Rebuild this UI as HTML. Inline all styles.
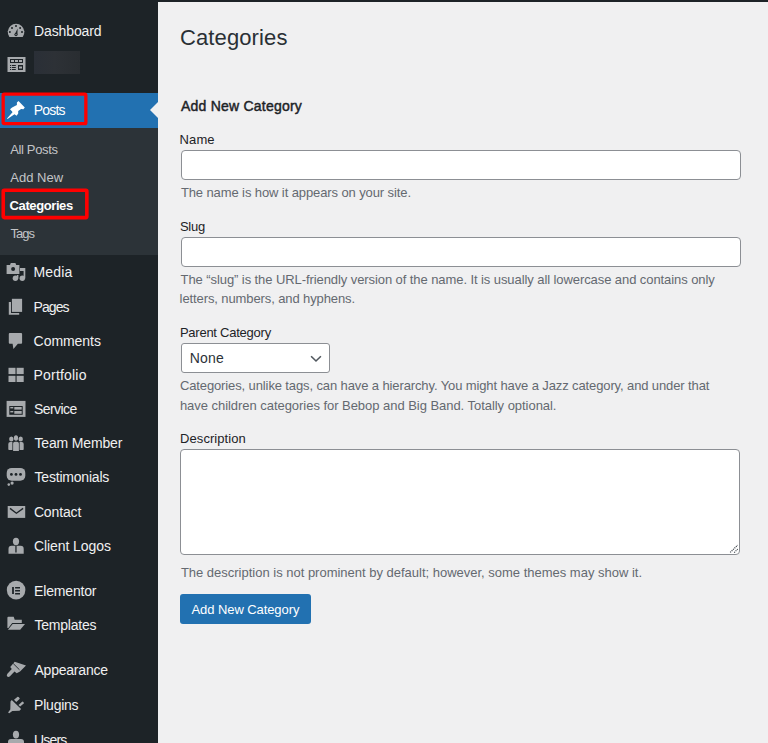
<!DOCTYPE html>
<html><head><meta charset="utf-8">
<style>
html,body{margin:0;padding:0;width:768px;height:743px;overflow:hidden;background:#f0f0f1;font-family:"Liberation Sans",sans-serif;}
.a{position:absolute;}
.t{position:absolute;white-space:nowrap;line-height:1;}
.box{position:absolute;background:#fff;border:1px solid #8c8f94;border-radius:4px;box-sizing:border-box;}
.red{position:absolute;border:3.4px solid #ff0000;border-radius:2.5px;box-sizing:border-box;}
svg.a{overflow:visible}
</style></head><body>
<div class="a" style="left:0;top:0;width:158px;height:743px;background:#1d2327"></div>
<div class="a" style="left:0;top:0;width:768px;height:2px;background:#1d2327"></div>
<!-- blurred row -->
<div class="a" style="left:34px;top:51px;width:46px;height:23px;background:linear-gradient(90deg,#2a2f37 0%,#2d3136 45%,#292d31 100%)"></div>
<!-- Posts band -->
<div class="a" style="left:0;top:93px;width:158px;height:35px;background:#2271b1"></div>
<div class="a" style="left:150px;top:102px;width:0;height:0;border-top:8px solid transparent;border-bottom:8px solid transparent;border-right:8px solid #f0f0f1"></div>
<!-- submenu -->
<div class="a" style="left:0;top:128px;width:158px;height:127px;background:#2c3338"></div>

<svg class="a" style="left:0;top:0" width="30" height="743" viewBox="0 0 30 743">
 <g fill="#a7aaad">
  <!-- dashboard gauge -->
  <path d="M9.4 37 A8.3 8.3 0 1 1 22.7 37 Z"/>
  <g fill="#1d2327">
   <circle cx="16" cy="26" r="1"/><circle cx="12" cy="28" r="1"/><circle cx="20.1" cy="28" r="1"/>
   <circle cx="9.9" cy="31.9" r="1"/><circle cx="22" cy="31.9" r="1"/>
   <path d="M17.6 28.6 L17.4 34.5 L14.6 34.5 Z"/>
   <circle cx="16" cy="34.6" r="1.6"/>
  </g>
  <circle cx="16" cy="34.6" r="0.6" fill="#a7aaad"/>
  <!-- table icon row2 -->
  <rect x="7.5" y="57" width="18" height="15"/>
  <g fill="#1d2327">
   <rect x="10" y="59" width="13" height="4"/>
   <rect x="10" y="65" width="1" height="1"/><rect x="11.8" y="65" width="4" height="1"/>
   <rect x="10" y="67" width="1" height="1"/><rect x="11.8" y="67" width="4" height="1"/>
   <rect x="10" y="69" width="1" height="1"/><rect x="11.8" y="69" width="4" height="1"/>
   <rect x="18" y="65" width="5" height="5"/>
  </g>
  <g fill="#a7aaad">
   <rect x="11" y="60" width="3" height="2"/><rect x="15" y="60" width="3" height="2"/><rect x="19" y="60" width="3" height="2"/>
   <rect x="19" y="66.5" width="3" height="2"/>
  </g>
  <!-- media -->
  <path d="M6.6 265 H10 L10.8 263 H15.4 L16.2 265 H19.4 V274 H6.6 Z"/>
  <circle cx="13.1" cy="268.9" r="2" fill="#1d2327"/>
  <path d="M20 268 H25.3 V278.5 H23.6 V271 H20 Z"/>
  <circle cx="22.3" cy="278.2" r="2.7"/>
  <circle cx="15.4" cy="278.2" r="2.7"/>
  <rect x="16.8" y="275" width="1.6" height="3.5"/>
  <!-- pages -->
  <rect x="11.9" y="298.8" width="10.2" height="13.1"/>
  <path d="M8.8 301.9 H11 V312.9 H19.2 V314.8 H8.8 Z"/>
  <!-- comments -->
  <path d="M9.8 333 H21.1 Q22.1 333 22.1 334 V342.8 Q22.1 343.8 21.1 343.8 H17.9 L13.4 349 L12.6 343.8 H9.8 Q8.8 343.8 8.8 342.8 V334 Q8.8 333 9.8 333 Z"/>
  <!-- portfolio -->
  <rect x="8.5" y="367.8" width="7" height="6.3"/><rect x="16.6" y="367.8" width="7.1" height="6.3"/>
  <rect x="8.5" y="375.8" width="7" height="6.2"/><rect x="16.6" y="375.8" width="7.1" height="6.2"/>
  <!-- service -->
  <rect x="6.6" y="400.9" width="18.9" height="16"/>
  <rect x="9.3" y="406" width="13.4" height="8.8" fill="#1d2327"/>
  <rect x="10.3" y="407" width="3" height="1.4"/><rect x="14.3" y="407" width="7.4" height="2.6"/>
  <rect x="10.3" y="411" width="3" height="1.4"/><rect x="14.3" y="411" width="7.4" height="2.8"/>
  <!-- team member -->
  <ellipse cx="11.3" cy="438.9" rx="2.2" ry="2.5"/><ellipse cx="16" cy="438" rx="2.1" ry="2.8"/><ellipse cx="20.7" cy="438.9" rx="2.2" ry="2.5"/>
  <path d="M8.3 449.2 V444 Q8.3 442 10.3 442 H12.4 V450 H9.1 Q8.3 450 8.3 449.2 Z"/>
  <path d="M13.1 450.9 V443.6 Q13.1 441.8 14.9 441.8 H17.1 Q18.9 441.8 18.9 443.6 V450.9 Z"/>
  <path d="M23.7 449.2 V444 Q23.7 442 21.7 442 H19.6 V450 H22.9 Q23.7 450 23.7 449.2 Z"/>
  <!-- testimonials -->
  <rect x="6.7" y="467.9" width="18.6" height="12.9" rx="5" ry="5"/>
  <circle cx="12.1" cy="483.1" r="1.6"/><circle cx="8.8" cy="484.6" r="1.3"/>
  <g fill="#1d2327"><circle cx="11.4" cy="474.4" r="1.4"/><circle cx="16" cy="474.4" r="1.4"/><circle cx="20.5" cy="474.4" r="1.4"/></g>
  <!-- contact -->
  <rect x="7.7" y="506" width="17.5" height="11.9"/>
  <path d="M10 508.4 L16.4 513.2 L23.1 508.4" fill="none" stroke="#1d2327" stroke-width="1.4"/>
  <!-- client logos -->
  <ellipse cx="16" cy="541.4" rx="3.1" ry="3.7"/>
  <path d="M8.5 553.7 V549 Q8.5 545.8 11.5 545.8 H20.7 Q23.7 545.8 23.7 549 V553.7 Z"/>
  <rect x="15.3" y="546" width="1.3" height="6.5" fill="#1d2327"/>
  <!-- elementor -->
  <circle cx="16.1" cy="590.1" r="9.3"/>
  <g fill="#1d2327"><rect x="12.1" y="587" width="1.8" height="7"/><rect x="15.1" y="587" width="4.9" height="1.5"/><rect x="15.1" y="590" width="4.9" height="1.5"/><rect x="15.1" y="593" width="4.9" height="1.5"/></g>
  <!-- templates -->
  <path d="M7.4 628 V617.8 Q7.4 616.8 8.4 616.8 H13.7 L14.7 619.8 H21.8 V623 H12.2 L8.4 628 Z"/>
  <path d="M8 629.8 L12.6 624 H25 L20.2 629.8 Z"/>
  <!-- appearance brush -->
  <path d="M14.7 661.8 L26 665.4 L20 671.6 L16.7 673.2 L14.5 671.5 L10 676.3 Q8.5 677.5 7.2 676.5 Q6.2 675.2 7.4 673.8 L11.8 669.1 L10.2 666.9 Z"/>
  <path d="M13.2 663.5 L19.5 669.8" stroke="#1d2327" stroke-width="0.9" fill="none"/>
  <!-- plugins -->
  <path d="M11.75 700.1 L21.1 709.1 L19.5 710.8 L12.3 710.9 L9.6 713.1 Q8.6 713.4 8.2 712.3 L10.3 709.6 L10.5 701.5 Z"/>
  <path d="M14 699.75 L17.6 696.8 Q19 696.6 19.8 698.8 L16.3 702 Z"/>
  <path d="M18.5 704.9 L22.4 701.4 Q23.6 701.5 24 703.3 L20.15 706.5 Z"/>
  <!-- users -->
  <ellipse cx="16" cy="734.6" rx="3.1" ry="3.9"/>
  <path d="M8 743 V742 Q8 738.9 11 738.9 H21 Q24 738.9 24 742 V743 Z"/>
 </g>
 <!-- pin -->
 <path fill="#ffffff" d="M7 118.4 L12.5 112.3 L12.1 111.6 L10 109.3 L12.1 107.4 L16.9 105.1 L16.9 102.5 L18.5 101.1 L24.8 107.5 L23.4 109.3 L21.1 109 L18.2 110.9 L18.2 113.5 L16.6 115.8 L14.5 114.3 L7.5 118.9 Z"/>
</svg>

<!-- form boxes -->
<div class="box" style="left:181px;top:150px;width:560px;height:30px"></div>
<div class="box" style="left:181px;top:237px;width:560px;height:30px"></div>
<div class="box" style="left:181px;top:343px;width:149px;height:30px;border-radius:3px"></div>
<svg class="a" style="left:304px;top:346px" width="30" height="30" viewBox="304 346 30 30"><path d="M311.1 356.2 L316 361 L320.9 356.2" fill="none" stroke="#50575e" stroke-width="1.6"/></svg>
<div class="box" style="left:180px;top:449px;width:560px;height:106px"></div>
<svg class="a" style="left:728px;top:543px" width="12" height="12" viewBox="0 0 12 12"><path d="M2.2 9.4 L9.7 2.1 M6.2 9.6 L9.7 6.1" stroke="#3c434a" stroke-width="1.2" stroke-dasharray="1.1 0.9" fill="none"/></svg>
<div class="a" style="left:180px;top:594px;width:131px;height:30px;background:#2271b1;border-radius:3px"></div>

<div id="h1" class="t" style="left:180.00px;top:27px;font-size:22px;font-weight:400;color:#2a3035;letter-spacing:0.111px;">Categories</div>
<div id="h2" class="t" style="left:181.00px;top:99px;font-size:14px;font-weight:400;color:#1d2327;letter-spacing:0.220px;-webkit-text-stroke:0.45px #1d2327;">Add New Category</div>
<div id="l1" class="t" style="left:179.50px;top:133px;font-size:13px;font-weight:400;color:#1d2327;letter-spacing:0.133px;">Name</div>
<div id="d1" class="t" style="left:180.90px;top:186px;font-size:13px;font-weight:400;color:#646970;letter-spacing:-0.103px;">The name is how it appears on your site.</div>
<div id="l2" class="t" style="left:179.90px;top:220px;font-size:13px;font-weight:400;color:#1d2327;letter-spacing:-0.267px;">Slug</div>
<div id="d2a" class="t" style="left:180.60px;top:273px;font-size:13px;font-weight:400;color:#646970;letter-spacing:-0.081px;">The “slug” is the URL-friendly version of the name. It is usually all lowercase and contains only</div>
<div id="d2b" class="t" style="left:179.60px;top:292px;font-size:13px;font-weight:400;color:#646970;letter-spacing:-0.103px;">letters, numbers, and hyphens.</div>
<div id="l3" class="t" style="left:179.90px;top:326px;font-size:13px;font-weight:400;color:#1d2327;letter-spacing:-0.243px;">Parent Category</div>
<div id="sel" class="t" style="left:189.80px;top:351px;font-size:14px;font-weight:400;color:#2c3338;letter-spacing:0.133px;">None</div>
<div id="d3a" class="t" style="left:179.90px;top:379px;font-size:13px;font-weight:400;color:#646970;letter-spacing:-0.115px;">Categories, unlike tags, can have a hierarchy. You might have a Jazz category, and under that</div>
<div id="d3b" class="t" style="left:179.90px;top:399px;font-size:13px;font-weight:400;color:#646970;letter-spacing:-0.040px;">have children categories for Bebop and Big Band. Totally optional.</div>
<div id="l4" class="t" style="left:180.10px;top:432px;font-size:13px;font-weight:400;color:#1d2327;letter-spacing:0.060px;">Description</div>
<div id="d4" class="t" style="left:180.90px;top:566px;font-size:13px;font-weight:400;color:#646970;letter-spacing:-0.008px;">The description is not prominent by default; however, some themes may show it.</div>
<div id="btn" class="t" style="left:191.50px;top:603px;font-size:13px;font-weight:400;color:#ffffff;letter-spacing:-0.080px;">Add New Category</div>
<div id="m_dash" class="t" style="left:34.10px;top:24px;font-size:14px;font-weight:400;color:#f0f0f1;letter-spacing:-0.125px;">Dashboard</div>
<div id="m_posts" class="t" style="left:33.70px;top:103px;font-size:14px;font-weight:400;color:#ffffff;letter-spacing:-0.800px;">Posts</div>
<div id="s_all" class="t" style="left:10.20px;top:143px;font-size:13px;font-weight:400;color:#c3c4c7;letter-spacing:-0.350px;">All Posts</div>
<div id="s_add" class="t" style="left:10.20px;top:171px;font-size:13px;font-weight:400;color:#c3c4c7;letter-spacing:0.033px;">Add New</div>
<div id="s_cat" class="t" style="left:9.60px;top:199px;font-size:13px;font-weight:700;color:#ffffff;letter-spacing:-0.400px;">Categories</div>
<div id="s_tags" class="t" style="left:10.60px;top:227px;font-size:13px;font-weight:400;color:#c3c4c7;letter-spacing:-1.000px;">Tags</div>
<div id="m_media" class="t" style="left:33.50px;top:265px;font-size:14px;font-weight:400;color:#f0f0f1;letter-spacing:0.150px;">Media</div>
<div id="m_pages" class="t" style="left:33.50px;top:300px;font-size:14px;font-weight:400;color:#f0f0f1;letter-spacing:-0.900px;">Pages</div>
<div id="m_comm" class="t" style="left:33.60px;top:334px;font-size:14px;font-weight:400;color:#f0f0f1;letter-spacing:-0.057px;">Comments</div>
<div id="m_port" class="t" style="left:33.50px;top:368px;font-size:14px;font-weight:400;color:#f0f0f1;letter-spacing:0.200px;">Portfolio</div>
<div id="m_serv" class="t" style="left:33.90px;top:402px;font-size:14px;font-weight:400;color:#f0f0f1;letter-spacing:-0.533px;">Service</div>
<div id="m_team" class="t" style="left:34.50px;top:436px;font-size:14px;font-weight:400;color:#f0f0f1;letter-spacing:-0.160px;">Team Member</div>
<div id="m_test" class="t" style="left:34.50px;top:470px;font-size:14px;font-weight:400;color:#f0f0f1;letter-spacing:-0.200px;">Testimonials</div>
<div id="m_cont" class="t" style="left:33.90px;top:505px;font-size:14px;font-weight:400;color:#f0f0f1;letter-spacing:-0.133px;">Contact</div>
<div id="m_client" class="t" style="left:33.90px;top:539px;font-size:14px;font-weight:400;color:#f0f0f1;letter-spacing:-0.073px;">Client Logos</div>
<div id="m_elem" class="t" style="left:34.10px;top:584px;font-size:14px;font-weight:400;color:#f0f0f1;letter-spacing:-0.175px;">Elementor</div>
<div id="m_templ" class="t" style="left:34.50px;top:618px;font-size:14px;font-weight:400;color:#f0f0f1;letter-spacing:-0.225px;">Templates</div>
<div id="m_app" class="t" style="left:34.50px;top:663px;font-size:14px;font-weight:400;color:#f0f0f1;letter-spacing:-0.222px;">Appearance</div>
<div id="m_plug" class="t" style="left:34.10px;top:698px;font-size:14px;font-weight:400;color:#f0f0f1;letter-spacing:-0.233px;">Plugins</div>
<div id="m_users" class="t" style="left:34.10px;top:733px;font-size:14px;font-weight:400;color:#f0f0f1;letter-spacing:-0.850px;">Users</div>

<svg class="a" style="left:0;top:80px" width="100" height="150" viewBox="0 80 100 150">
 <rect x="3.15" y="94.05" width="82.7" height="29.6" rx="1" ry="1" fill="none" stroke="#ff0000" stroke-width="3.3"/>
 <rect x="3.25" y="190.2" width="83.6" height="27.4" rx="1" ry="1" fill="none" stroke="#ff0000" stroke-width="3.6"/>
</svg>

</body></html>
